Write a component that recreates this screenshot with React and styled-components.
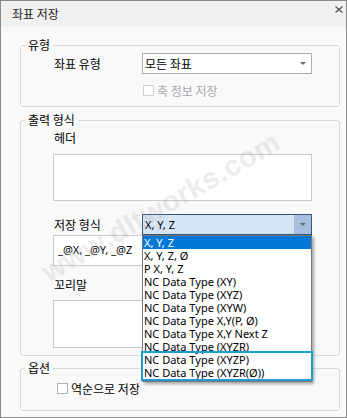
import React from 'react';
import styled, { createGlobalStyle } from 'styled-components';

const GlobalStyle = createGlobalStyle`
  html, body {
    margin: 0;
    padding: 0;
    background: #ffffff;
  }
  body {
    font-family: "Noto Sans CJK KR", "Noto Sans", sans-serif;
    font-size: 12px;
    color: #000;
  }
  * {
    box-sizing: border-box;
  }
`;

const Window = styled.div`
  position: relative;
  width: 347px;
  height: 418px;
  border: 1px solid #8a8a8a;
  background: #f9f9f9;
  display: flex;
  flex-direction: column;
  overflow: hidden;
`;

const TitleBar = styled.div`
  height: 26px;
  flex: none;
  background: #f0f0f0;
  display: flex;
  justify-content: space-between;
  padding-left: 11px;
`;

const Title = styled.span`
  align-self: center;
  line-height: 16px;
  color: #222;
`;

const CloseButton = styled.div`
  margin: 5px 3px 0 0;
  width: 8px;
  height: 7px;
  display: flex;
`;

const Body = styled.div`
  flex: 1;
  display: flex;
  flex-direction: column;
  padding: 10px 6px 0 19px;
`;

const Group = styled.fieldset`
  margin: ${p => p.top || 0}px 0 0 0;
  padding: 0 6px 0 4px;
  border: 1px solid #d9d9d9;
  border-radius: 3px;
  min-width: 0;
`;

const Legend = styled.legend`
  padding: 0 3px;
  line-height: 16px;
  font-size: 12px;
`;

const GroupContent = styled.div`
  display: flex;
  flex-direction: column;
  padding: ${p => p.pt || 0}px 0 ${p => p.pb || 0}px 28px;
`;

const FieldRow = styled.div`
  display: flex;
  align-items: center;
  margin-top: ${p => p.mt || 0}px;
`;

const Label = styled.div`
  width: ${p => p.w || 'auto'};
  flex: none;
  padding-left: 1px;
  line-height: 16px;
  margin-top: ${p => p.mt || 0}px;
`;

const ComboWrap = styled.div`
  position: relative;
  width: 170px;
  height: 21px;
`;

const Combo = styled.div`
  width: 100%;
  height: 100%;
  display: flex;
  align-items: center;
  border: 1px solid ${p => (p.active ? '#36587f' : '#adadad')};
  background: ${p => (p.active ? '#d5e4f5' : '#ffffff')};
  padding-left: 1px;
`;

const ComboText = styled.span`
  flex: 1;
  line-height: 16px;
  font-family: ${p => (p.latin ? '"Noto Sans", sans-serif' : 'inherit')};
  font-size: ${p => (p.latin ? '11px' : '12px')};
  padding-left: 1px;
`;

const ComboButton = styled.div`
  width: 17px;
  height: 100%;
  display: flex;
  align-items: center;
  justify-content: center;
  background: ${p => (p.active ? '#a8bedd' : 'transparent')};
`;

const Arrow = styled.div`
  width: 0;
  height: 0;
  border-left: 3px solid transparent;
  border-right: 3px solid transparent;
  border-top: 3px solid #6a6a6a;
`;

const DropList = styled.div`
  position: absolute;
  top: 100%;
  left: 0;
  width: 170px;
  border: 1px solid #767676;
  background: #ffffff;
  padding-bottom: 2px;
  box-shadow: 2px 2px 3px rgba(0, 0, 0, 0.35);
  z-index: 3;
`;

const Item = styled.div`
  height: 13px;
  line-height: 13px;
  padding-left: 1px;
  font-family: "Noto Sans", sans-serif;
  font-size: 11px;
  white-space: nowrap;
  background: ${p => (p.selected ? '#0078d7' : 'transparent')};
  color: ${p => (p.selected ? '#ffffff' : '#000000')};
`;

const FocusBox = styled.div`
  outline: 2px solid #1f9bd4;
`;

const TextBox = styled.div`
  width: 259px;
  height: ${p => p.h}px;
  margin-top: ${p => p.mt || 0}px;
  border: 1px solid #c9c9c9;
  background: #ffffff;
  padding: 6px 4px;
  line-height: 16px;
  font-family: "Noto Sans", sans-serif;
  font-size: 11px;
`;

const CheckRow = styled.div`
  display: flex;
  align-items: center;
  gap: 3px;
  height: 16px;
  margin-top: ${p => p.mt || 0}px;
  padding-left: ${p => p.pl || 0}px;
  color: ${p => (p.disabled ? '#a8a8a8' : '#000')};
`;

const CheckBox = styled.span`
  width: 11px;
  height: 11px;
  flex: none;
  border: 1px solid ${p => (p.disabled ? '#d2d2d2' : '#b3b3b3')};
  background: #ffffff;
`;

const Watermark = styled.div`
  position: absolute;
  left: 160px;
  top: 206px;
  transform: translate(-50%, -50%) rotate(-30deg);
  font-family: "Liberation Sans", sans-serif;
  font-weight: bold;
  font-size: 29px;
  letter-spacing: 0.5px;
  white-space: nowrap;
  color: rgba(170, 170, 170, 0.22);
  pointer-events: none;
  z-index: 2;
`;

const formats = [
  'X, Y, Z',
  'X, Y, Z, Ø',
  'P X, Y, Z',
  'NC Data Type (XY)',
  'NC Data Type (XYZ)',
  'NC Data Type (XYW)',
  'NC Data Type X,Y(P, Ø)',
  'NC Data Type X,Y Next Z',
  'NC Data Type (XYZR)',
];

const focused = ['NC Data Type (XYZP)', 'NC Data Type (XYZR(Ø))'];

const App = () => (
  <>
    <GlobalStyle />
    <Window>
      <TitleBar>
        <Title>좌표 저장</Title>
        <CloseButton>
          <svg width="8" height="7" viewBox="0 0 8 7">
            <path d="M0.5 0.5 L7.5 6.5 M7.5 0.5 L0.5 6.5" stroke="#555" strokeWidth="1.3" fill="none" />
          </svg>
        </CloseButton>
      </TitleBar>
      <Body>
        <Group>
          <Legend>유형</Legend>
          <GroupContent pb={8}>
            <FieldRow>
              <Label w="89px">좌표 유형</Label>
              <ComboWrap>
                <Combo>
                  <ComboText>모든 좌표</ComboText>
                  <ComboButton>
                    <Arrow />
                  </ComboButton>
                </Combo>
              </ComboWrap>
            </FieldRow>
            <CheckRow disabled mt={8} pl={90}>
              <CheckBox disabled />
              <span>축 정보 저장</span>
            </CheckRow>
          </GroupContent>
        </Group>

        <Group top={5}>
          <Legend>출력 형식</Legend>
          <GroupContent pb={7}>
            <Label mt={2}>헤더</Label>
            <TextBox h={47} mt={8} />
            <FieldRow mt={13}>
              <Label w="89px">저장 형식</Label>
              <ComboWrap>
                <Combo active>
                  <ComboText latin>X, Y, Z</ComboText>
                  <ComboButton active>
                    <Arrow />
                  </ComboButton>
                </Combo>
                <DropList>
                  {formats.map((f, i) => (
                    <Item key={f} selected={i === 0}>
                      {f}
                    </Item>
                  ))}
                  <FocusBox>
                    {focused.map(f => (
                      <Item key={f}>{f}</Item>
                    ))}
                  </FocusBox>
                </DropList>
              </ComboWrap>
            </FieldRow>
            <TextBox h={31}>_@X, _@Y, _@Z</TextBox>
            <Label mt={11}>꼬리말</Label>
            <TextBox h={48} mt={7} />
          </GroupContent>
        </Group>

        <Group top={4}>
          <Legend>옵션</Legend>
          <GroupContent pb={14}>
            <CheckRow mt={4} pl={4}>
              <CheckBox />
              <span>역순으로 저장</span>
            </CheckRow>
          </GroupContent>
        </Group>
      </Body>
      <Watermark>www.dltworks.com</Watermark>
    </Window>
  </>
);

export default App;
